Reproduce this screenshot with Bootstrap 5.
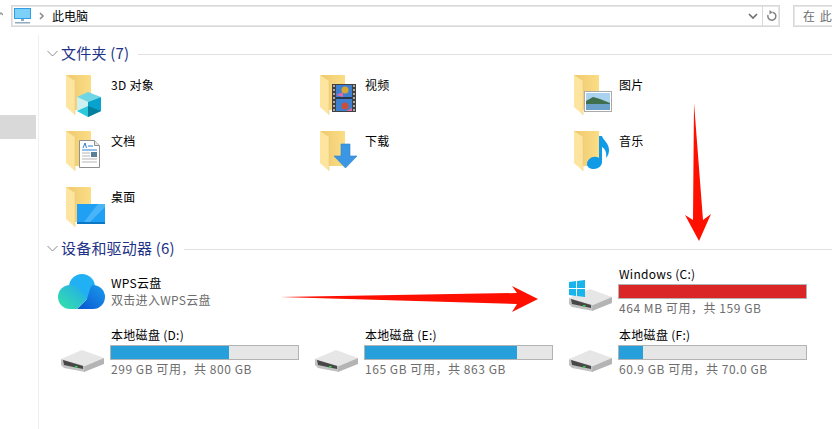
<!DOCTYPE html>
<html lang="zh-CN">
  <head>
    <meta charset="UTF-8" />
    <title>此电脑</title>
    <link href="https://cdn.jsdelivr.net/npm/bootstrap@5.3.0/dist/css/bootstrap.min.css" rel="stylesheet" />
    <style>
      html, body { height: 100%; overflow: hidden; }
      body { background: #fff; color: #000; font: 12px/16px "Noto Sans CJK SC", "Liberation Sans", sans-serif; }
      .shot { position: relative; width: 832px; height: 429px; overflow: hidden; }
      .topbar { height: 28px; padding: 5px 0 0 11px; }
      .addr { width: 769px; height: 22px; border: 1px solid #d9d9d9; box-shadow: inset 0 0 0 1px #e6e6e6; }
      .addr-pc { margin: 0 0 0 2px; }
      .addr-text { margin-left: 7px; }
      .addr-end { width: 17px; height: 100%; border-left: 1px solid #d9d9d9; }
      .search { width: 60px; height: 22px; margin-left: 13px; padding-left: 9px; border: 1px solid #d9d9d9; box-shadow: inset 0 0 0 1px #e6e6e6; color: #6d6d6d; letter-spacing: 1px; white-space: nowrap; line-height: 20px; }
      .up-stub { width: 3px; height: 8px; margin-top: 6px; margin-left: -11px; margin-right: 8px; }
      .side { width: 39px; height: 394px; margin-top: 7px; border-right: 1px solid #efefef; padding-top: 80px; }
      .side-sel { width: 36px; height: 24px; background: #d9d9d9; }
      .content { flex: 1; padding-top: 17px; min-width: 0; }
      .sec-head { height: 16px; margin-left: 8px; }
      .sec-title { color: #1e3287; font-size: 15px; line-height: 16px; margin-left: 3px; letter-spacing: .2px; white-space: nowrap; }
      .sec-line { flex: 1; height: 1px; background: #e2e2e2; margin: 2px 0 0 9px; }
      .items { display: grid; grid-template-columns: 254px 254px 254px; padding-left: 21px; }
      .folders { grid-auto-rows: 56px; margin-top: 10px; margin-bottom: 1px; }
      .drives { grid-auto-rows: 61px; margin-top: 7px; }
      .tile { display: flex; gap: 3px; }
      .tile svg { overflow: visible; }
      .tile-disk { gap: 2px; }
      .tile-name { padding-top: 6px; white-space: nowrap; letter-spacing: .3px; }
      .wps-text { padding-top: 6px; }
      .disk-body { width: 189px; }
      .disk-name { height: 21px; padding-left: 1px; line-height: 22px; white-space: nowrap; letter-spacing: .3px; }
      .disk-bar { height: 15px; border: 1px solid #b3b3b3; background: #e6e6e6; }
      .disk-fill { height: 100%; background: #26a0da; }
      .disk-fill.full { background: #da2626; }
      .disk-sub { color: #6d6d6d; height: 18px; padding-left: 1px; line-height: 18px; white-space: nowrap; letter-spacing: .55px; }
      .wps-sub { color: #6d6d6d; letter-spacing: .3px; padding-top: 1px; }
      .arrows { position: absolute; left: 0; top: 0; pointer-events: none; }
    </style>
  </head>
  <body>
    <svg width="0" height="0" class="d-block">
      <defs>
        <linearGradient id="fback" x1="0" y1="0" x2="1" y2="0"><stop offset="0" stop-color="#eec96f"/><stop offset="1" stop-color="#fbdd85"/></linearGradient>
        <linearGradient id="wpsa" x1="0" y1="1" x2="1" y2="0"><stop offset="0" stop-color="#35e3a5"/><stop offset="1" stop-color="#22a8ef"/></linearGradient>
        <linearGradient id="wpsb" x1="0" y1="1" x2="1" y2="0"><stop offset="0" stop-color="#0a55d0"/><stop offset="1" stop-color="#1a9cec"/></linearGradient>
        <symbol id="folder" viewBox="0 0 48 48">
          <path d="M6 4h25v35H15z" fill="url(#fback)"/>
          <path d="M6 4l9 6v34l-9-8z" fill="#fde59f"/>
          <path d="M15 10v34" stroke="#e8cd84" stroke-width=".6"/>
        </symbol>
        <g id="drive">
          <path d="M1 35l21-9 22 8-19 8z" fill="#e6e6e6"/>
          <path d="M1 35l24 7v6L4 44l-3-3z" fill="#c2c2c2"/>
          <path d="M3 36l20 6v3L4 41z" fill="#474747"/>
          <path d="M25 42l19-8v6l-20 8z" fill="#b4b4b4"/>
          <rect x="15" y="42" width="2.500" height="1.600" fill="#35d04f"/>
        </g>
      </defs>
    </svg>
    <div class="shot">
      <div class="topbar d-flex">
        <svg class="up-stub flex-shrink-0" viewBox="0 0 3 8"><path d="M-2 5l3-3 2 2" fill="none" stroke="#999" stroke-width="1.300"/></svg>
        <div class="addr d-flex align-items-center flex-shrink-0">
          <svg class="addr-pc" width="17" height="16" viewBox="0 0 17 16">
            <rect x="0" y="0" width="17" height="11" fill="#2f9ee3"/>
            <rect x="1" y="1" width="15" height="9" fill="#7dd0f8"/>
            <rect x="7" y="11" width="3" height="2" fill="#8fa9bd"/>
            <rect x="1" y="14" width="15" height="1.500" fill="#8fa9bd"/>
          </svg>
          <svg class="ms-2" width="6" height="8" viewBox="0 0 6 8"><path d="M1 1l3 3-3 3" fill="none" stroke="#8a8a8a" stroke-width="1.600"/></svg>
          <span class="addr-text flex-grow-1">此电脑</span>
          <svg class="me-1" width="10" height="7" viewBox="0 0 10 7"><path d="M1 1l4 4 4-4" fill="none" stroke="#6f6f6f" stroke-width="1.600"/></svg>
          <div class="addr-end d-flex align-items-center justify-content-center">
            <svg width="11" height="12" viewBox="0 0 11 12"><path d="M6.500 2.200A4 4 0 1 1 2 5" fill="none" stroke="#828282" stroke-width="1.500"/><path d="M3.500 0v4.500l3-2.200z" fill="#828282"/></svg>
          </div>
        </div>
        <div class="search flex-shrink-0">在 此电脑中搜索</div>
      </div>
      <div class="d-flex">
        <div class="side"><div class="side-sel"></div></div>
        <div class="content">
          <div class="sec-head d-flex align-items-center">
            <svg width="11" height="7" viewBox="0 0 11 7"><path d="M.5 1l5 5 5-5" fill="none" stroke="#8a8a8a"/></svg>
            <span class="sec-title">文件夹 (7)</span>
            <span class="sec-line"></span>
          </div>
          <div class="items folders">
            <div class="tile">
              <svg width="48" height="48" viewBox="0 0 48 48"><use href="#folder"/>
                <path d="M17 26l11-5 13 5-13 5z" fill="#6fd6e6"/><path d="M28 31l13-5v14l-13 6z" fill="#08a3cc"/><path d="M17 26l11 5v15l-11-6z" fill="#cdf1f2"/><path d="M17 40l11-5v11z" fill="#2cc9da"/><path d="M28 35l13 5-13 6z" fill="#067f9e"/>
              </svg>
              <div class="tile-name">3D 对象</div>
            </div>
            <div class="tile">
              <svg width="48" height="48" viewBox="0 0 48 48"><use href="#folder"/>
                <rect x="18" y="13" width="24" height="28" fill="#43413f"/>
                <rect x="22" y="14" width="16" height="26" fill="#3f7fd0"/>
                <path d="M22 27h16" stroke="#222" stroke-width="1.500"/>
                <circle cx="31" cy="19" r="3.500" fill="#d9a62e"/><circle cx="31" cy="35" r="3.500" fill="#c94f3a"/><path d="M22 24l7-3v5zM32 40l6-3v3z" fill="#e06aa5"/>
                <path d="M20 14v26M40 14v26" stroke="#d0d0d0" stroke-width="1.500" stroke-dasharray="2 2"/>
              </svg>
              <div class="tile-name">视频</div>
            </div>
            <div class="tile">
              <svg width="48" height="48" viewBox="0 0 48 48"><use href="#folder"/>
                <rect x="16.500" y="20.500" width="27" height="20" fill="#fff" stroke="#aaa"/>
                <rect x="18" y="22" width="24" height="17" fill="#a9d3ef"/>
                <path d="M18 30l7-4 7 2 10 4v2H18z" fill="#3f6f4d"/><rect x="18" y="33" width="24" height="6" fill="#6ba1c8"/>
              </svg>
              <div class="tile-name">图片</div>
            </div>
            <div class="tile">
              <svg width="48" height="48" viewBox="0 0 48 48"><use href="#folder"/>
                <path d="M19.500 13.500h15l5 5v22h-20z" fill="#fff" stroke="#8f8f8f"/><path d="M34.500 13.500v5h5" fill="#e5e5e5" stroke="#8f8f8f"/>
                <path d="M23 21l2-5 1.500 5" fill="none" stroke="#2b7fd0"/><path d="M28 19h5M22 23h15" stroke="#2b7fd0"/>
                <path d="M22 26h8M22 29h8M22 32h15M22 35h15" stroke="#b5b5b5"/><rect x="31" y="25" width="6" height="5" fill="#5a7f98"/>
              </svg>
              <div class="tile-name">文档</div>
            </div>
            <div class="tile">
              <svg width="48" height="48" viewBox="0 0 48 48"><use href="#folder"/>
                <path d="M27 17h9v12h7L31.500 41 20 29h7z" fill="#3b97e3" stroke="#2c82cc" stroke-width=".6"/>
              </svg>
              <div class="tile-name">下载</div>
            </div>
            <div class="tile">
              <svg width="48" height="48" viewBox="0 0 48 48"><use href="#folder"/>
                <path d="M31 9h3c1 4 7 7 7 14 0 3-1 6-3 8 1-6-1-9-4-11v15c0 4-4 7-8 7-4 0-7-2-7-5 0-4 5-8 9-7 1 0 2 0 3 1z" fill="#0f9be8"/>
              </svg>
              <div class="tile-name">音乐</div>
            </div>
            <div class="tile">
              <svg width="48" height="48" viewBox="0 0 48 48"><use href="#folder"/>
                <rect x="17" y="21" width="28" height="20" fill="#1fa0f5"/><rect x="17" y="39" width="28" height="2" fill="#0c78c5"/>
                <path d="M24 39l14-18h7v3L30 39z" fill="#4ab4f8"/>
              </svg>
              <div class="tile-name">桌面</div>
            </div>
          </div>
          <div class="sec-head d-flex align-items-center">
            <svg width="11" height="7" viewBox="0 0 11 7"><path d="M.5 1l5 5 5-5" fill="none" stroke="#8a8a8a"/></svg>
            <span class="sec-title">设备和驱动器 (6)</span>
            <span class="sec-line"></span>
          </div>
          <div class="items drives">
            <div class="tile">
              <svg width="48" height="50" viewBox="0 0 48 50">
                <circle cx="22" cy="24" r="13" fill="#22b0f5"/>
                <path d="M17 46l10-10 3-10c1-3 2-4 3-4a12 12 0 0 1 0 24z" fill="url(#wpsb)"/>
                <path d="M10 46a12 12 0 0 1 0-24c3 0 6 1 8 3l9 11-10 10z" fill="url(#wpsa)"/>
              </svg>
              <div class="wps-text">
                <div class="tile-name">WPS云盘</div>
                <div class="wps-sub">双击进入WPS云盘</div>
              </div>
            </div>
            <div></div>
            <div class="tile tile-disk">
              <svg width="48" height="50" viewBox="0 0 48 50"><use href="#drive"/>
                <path d="M1 19l7-1v7H1zM9 18l8-1v8H9zM1 26h7v7l-7-1zM9 26h8v8l-8-1z" fill="#17b4ed"/>
              </svg>
              <div class="disk-body">
                <div class="disk-name">Windows (C:)</div>
                <div class="disk-bar"><div class="disk-fill full w-100"></div></div>
                <div class="disk-sub">464 MB 可用，共 159 GB</div>
              </div>
            </div>
            <div class="tile tile-disk">
              <svg width="48" height="50" viewBox="0 0 48 50"><use href="#drive"/></svg>
              <div class="disk-body">
                <div class="disk-name">本地磁盘 (D:)</div>
                <div class="disk-bar"><div class="disk-fill" style="width: 63%"></div></div>
                <div class="disk-sub">299 GB 可用，共 800 GB</div>
              </div>
            </div>
            <div class="tile tile-disk">
              <svg width="48" height="50" viewBox="0 0 48 50"><use href="#drive"/></svg>
              <div class="disk-body">
                <div class="disk-name">本地磁盘 (E:)</div>
                <div class="disk-bar"><div class="disk-fill" style="width: 81.500%"></div></div>
                <div class="disk-sub">165 GB 可用，共 863 GB</div>
              </div>
            </div>
            <div class="tile tile-disk">
              <svg width="48" height="50" viewBox="0 0 48 50"><use href="#drive"/></svg>
              <div class="disk-body">
                <div class="disk-name">本地磁盘 (F:)</div>
                <div class="disk-bar"><div class="disk-fill" style="width: 13%"></div></div>
                <div class="disk-sub">60.9 GB 可用，共 70.0 GB</div>
              </div>
            </div>
          </div>
        </div>
      </div>
      <svg class="arrows" width="832" height="429" viewBox="0 0 832 429">
        <path d="M694 103L703 220 711 214 699 241 685 215 693 220z" fill="#fe0f00"/>
        <path d="M280 297L517 293 512 286 538 299 512 312 517 304z" fill="#fe0f00"/>
      </svg>
    </div>
    <script src="https://cdn.jsdelivr.net/npm/bootstrap@5.3.0/dist/js/bootstrap.bundle.min.js"></script>
  </body>
</html>
